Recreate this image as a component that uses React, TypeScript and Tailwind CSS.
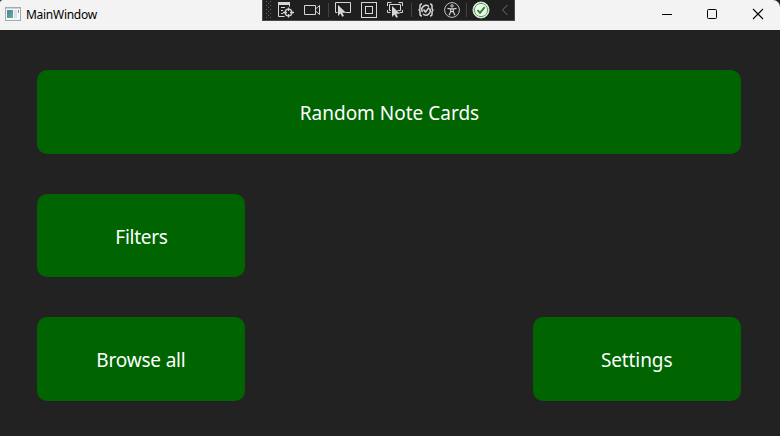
import type { ReactNode } from "react";

function Icon({ children, className = "" }: { children: ReactNode; className?: string }) {
  return (
    <svg
      viewBox="0 0 18 18"
      className={`h-[18px] w-[18px] shrink-0 ${className}`}
      fill="none"
      stroke="#d6d6d6"
      strokeWidth="1"
    >
      {children}
    </svg>
  );
}

function Separator({ className }: { className: string }) {
  return <div className={`h-[14px] w-px shrink-0 bg-[#424242] ${className}`} />;
}

const cursor = "M0 0v11l2.500-2.600 1.700 3.400 1.800-.9-1.700-3.200h3.700z";

function DebugToolbar() {
  return (
    <div className="absolute left-[262px] top-0 flex h-[21px] w-[253px] items-start overflow-hidden border-x border-b border-[#4a4a4a] bg-[#1f1f1f] pt-px">
      <svg viewBox="0 0 6 17" className="ml-[3px] h-[17px] w-[6px] shrink-0" fill="#666666">
        {[0, 4, 8, 12, 16].map((y) => (
          <g key={y}>
            <rect x="0" y={y} width="1" height="1" />
            <rect x="4" y={y} width="1" height="1" />
            <rect x="2" y={y + 2} width="1" height="1" />
          </g>
        ))}
      </svg>
      <Icon className="ml-[5px]">
        <path d="M7.500 15.500h-6v-14h11v4" />
        <path d="M1 2.500h12" strokeWidth="3" />
        <path d="M4 6.500h4M4 9.500h2M4 12.500h2" />
        <circle cx="11.500" cy="11.500" r="3.300" strokeWidth="1.300" />
        <path d="M11.500 6.500v3.500M11.500 13v3.500M6 11.500h4M13 11.500h4" strokeWidth="1.300" />
      </Icon>
      <Icon className="ml-2">
        <path d="M1.500 4.500h11v9h-11zM12.500 8l4-3.500v9l-4-3.500" />
      </Icon>
      <Separator className="ml-[7px] mt-[2px]" />
      <Icon className="ml-[5px]">
        <path d="M3.500 11.500h-2v-10h15v10h-5" />
        <path d={cursor} transform="translate(4 4)" fill="#d6d6d6" stroke="none" />
      </Icon>
      <Icon className="ml-2">
        <rect x="1.500" y="1.500" width="15" height="15" />
        <rect x="5.500" y="5.500" width="7" height="7" />
      </Icon>
      <Icon className="ml-2">
        <path d="M1.500 5v-3.500h4M12.500 1.500h4v3.500M1.500 9v2.500h3M16.500 9v2.500h-3M5 9.500H3.500v-6h11v6h-3" />
        <path d={cursor} transform="translate(6 5)" fill="#d6d6d6" stroke="none" />
      </Icon>
      <Separator className="ml-[7px] mt-[2px]" />
      <Icon className="ml-[5px]">
        <path
          d="M5 3Q3 3 3 5v1.700Q3 9 1.500 9 3 9 3 11.300V13q0 2 2 2M13 3q2 0 2 2v1.700Q15 9 16.500 9 15 9 15 11.300V13q0 2-2 2"
          strokeWidth="1.500"
        />
        <path
          d="M12 5.500A4.300 4.300 0 0 0 5.500 11M6 13a4.300 4.300 0 0 0 6.500-5.500M6.500 8.500l2 2.500L12 6.500"
          strokeWidth="1.500"
        />
      </Icon>
      <Icon className="ml-2">
        <circle cx="9" cy="9" r="7.400" stroke="#c2c2c2" />
        <circle cx="9" cy="4.900" r="1.200" />
        <path
          d="M4.500 7.300l3.200.6v2.800l-1.700 3.500M13.500 7.300l-3.200.6v2.800l1.700 3.500M7.700 7.900h2.600M7.700 10.700h2.600"
          strokeWidth="1.200"
        />
      </Icon>
      <Separator className="ml-[5px] mt-[2px]" />
      <Icon className="ml-[5px]">
        <circle cx="9" cy="9" r="8" fill="#eef6ee" stroke="#d3e5d3" />
        <circle cx="9" cy="9" r="6.600" stroke="#4aa34a" strokeWidth="1" />
        <path d="M5.500 9.200l2.500 2.600 4.700-5.600" stroke="#248524" strokeWidth="1.800" />
      </Icon>
      <svg viewBox="0 0 8 12" className="ml-[10px] mt-[3px] h-3 w-2 shrink-0" fill="none" stroke="#707070">
        <path d="M7.500 1 2.500 6l5 5" />
      </svg>
    </div>
  );
}

function WindowControls() {
  return (
    <div className="ml-auto flex h-full pt-2 pr-[16px]">
      <svg viewBox="0 0 12 12" className="h-3 w-3 shrink-0" fill="none" stroke="#000000">
        <path d="M1 6.500h10" />
      </svg>
      <svg viewBox="0 0 12 12" className="ml-[33px] h-3 w-3 shrink-0" fill="none" stroke="#000000">
        <rect x="1.500" y="1.500" width="9" height="9" rx="1" />
      </svg>
      <svg viewBox="0 0 12 12" className="ml-[34px] h-3 w-3 shrink-0" fill="none" stroke="#000000">
        <path d="M1 1l10 10M11 1 1 11" strokeWidth="1.100" />
      </svg>
    </div>
  );
}

function TitleBar() {
  return (
    <div className="shrink-0 bg-[#222222]">
      <header className="relative flex h-[30px] items-center rounded-tl-[3px] rounded-tr-[7px] bg-[#f3f3f3] text-black">
        <svg viewBox="0 0 16 14" className="ml-[5px] mb-[2px] h-[14px] w-4 shrink-0">
          <defs>
            <linearGradient id="pane" x1="0" y1="0" x2="1" y2="1">
              <stop offset="0" stopColor="#4b83a5" />
              <stop offset="1" stopColor="#61b18a" />
            </linearGradient>
          </defs>
          <rect x=".5" y=".5" width="15" height="13" fill="#f7f8f9" stroke="#a3abb0" />
          <path d="M1 1.500h14" stroke="#cbd1d5" />
          <rect x="2" y="3" width="6" height="8" fill="url(#pane)" />
          <rect x="9" y="3" width="3" height="8" fill="#dce2e7" />
          <rect x="13" y="3" width="1" height="3" fill="#7795ab" />
        </svg>
        <span className="ml-[5px] text-[12px] leading-4 tracking-[-0.28px]">MainWindow</span>
        <DebugToolbar />
        <WindowControls />
      </header>
    </div>
  );
}

function MenuButton({ label, className = "" }: { label: string; className?: string }) {
  return (
    <button
      className={`flex h-[83.67px] items-center justify-center rounded-[10px] bg-[#006400] text-[20px] leading-7 text-white ${className}`}
    >
      <span className="inline-block scale-x-95">{label}</span>
    </button>
  );
}

export default function App() {
  return (
    <div className="flex h-[436px] w-[780px] flex-col overflow-hidden bg-[#222222] font-['Noto_Sans',sans-serif]">
      <TitleBar />
      <main className="grid grid-cols-[208px_208px] content-start justify-between gap-y-10 pl-[37px] pr-[39px] pt-10">
        <MenuButton label="Random Note Cards" className="col-span-2 pt-[2px]" />
        <MenuButton label="Filters" className="pt-[3px] tracking-[-0.3px]" />
        <div />
        <MenuButton label="Browse all" className="pt-[2px] tracking-[-0.2px]" />
        <MenuButton label="Settings" className="pt-[2px] tracking-[-0.1px]" />
      </main>
    </div>
  );
}
